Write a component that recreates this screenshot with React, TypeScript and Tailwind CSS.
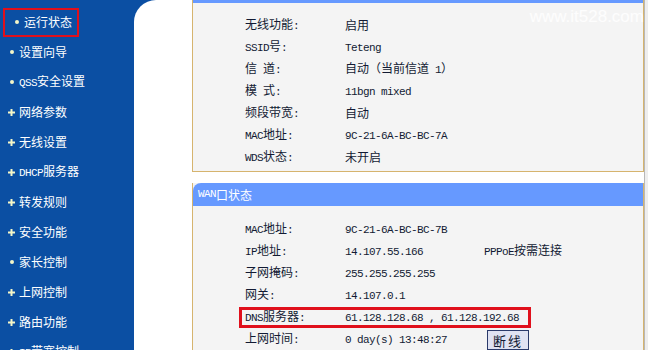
import React from 'react';

const cjk = '"Noto Sans CJK SC", "Noto Sans", sans-serif';

// split mixed text so latin runs use a narrow mono face (like the old bitmap font)
const Mixed = ({ text }: { text: string }) => {
  const parts = text.match(/[\x20-\x7e]+|[^\x20-\x7e]+/g) || [];
  return (
    <>
      {parts.map((p, i) =>
        /^[\x20-\x7e]+$/.test(p) ? (
          <span
            key={i}
            className="text-[11px] tracking-[-0.6px] whitespace-pre"
            style={{ fontFamily: '"Liberation Mono", monospace' }}
          >
            {p}
          </span>
        ) : (
          <span key={i}>{p}</span>
        ),
      )}
    </>
  );
};

const menu = [
  { name: '运行状态', dot: true },
  { name: '设置向导', dot: true },
  { name: 'QSS安全设置', dot: true },
  { name: '网络参数', dot: false },
  { name: '无线设置', dot: false },
  { name: 'DHCP服务器', dot: false },
  { name: '转发规则', dot: false },
  { name: '安全功能', dot: false },
  { name: '家长控制', dot: true },
  { name: '上网控制', dot: false },
  { name: '路由功能', dot: false },
  { name: 'IP带宽控制', dot: false },
];

const wireless = [
  ['无线功能:', '启用'],
  ['SSID号:', 'Teteng'],
  ['信 道:', '自动（当前信道 1）'],
  ['模 式:', '11bgn mixed'],
  ['频段带宽:', '自动'],
  ['MAC地址:', '9C-21-6A-BC-BC-7A'],
  ['WDS状态:', '未开启'],
];

const Row = ({ label, value, extra }: { label: string; value: string; extra?: React.ReactNode }) => (
  <div className="flex items-center h-[22px] pl-[52px]">
    <div className="w-[100px]">
      <Mixed text={label} />
    </div>
    <div className="w-[139px] whitespace-nowrap">
      <Mixed text={value} />
    </div>
    {extra}
  </div>
);

export default function App() {
  return (
    <div
      className="relative flex w-[648px] h-[350px] overflow-hidden bg-[#0b4fa3] text-[12px] text-[#121a33]"
      style={{ fontFamily: cjk }}
    >
      {/* Sidebar */}
      <div className="w-[134px] shrink-0 pt-[7px] text-white text-[12px]">
        {menu.map((m, i) => (
          <div key={m.name} className="h-[30px] flex items-center">
            <div
              className={`flex items-center h-[29px] pl-[8px] gap-[4px] ${
                i === 0 ? 'ml-[3px] -mr-[3px] pl-[5px] w-[76px] border-[2px] border-[#e0101c]' : ''
              }`}
            >
              <span className="w-[7px] flex items-center justify-center">
                {m.dot ? (
                  <span className="block w-[4px] h-[4px] rounded-full bg-[#f4f6c8]" />
                ) : (
                  <svg width="7" height="7" viewBox="0 0 7 7">
                    <path d="M3.5 0v7M0 3.5h7" stroke="#f4f6c8" strokeWidth="2" />
                  </svg>
                )}
              </span>
              <span className="whitespace-nowrap">
                <Mixed text={m.name} />
              </span>
            </div>
          </div>
        ))}
      </div>

      {/* Main content */}
      <div className="flex-1 flex bg-white rounded-tl-[22px] pl-[58px]">
        <div className="flex-1 flex flex-col">
          {/* Wireless status (scrolled, header cut off) */}
          <div className="bg-[#f4f4f4] border-l border-r border-b border-[#d6b46e] h-[179px]">
            <div className="h-[3px] bg-[#6699ff]" />
            <div className="pt-[11px]">
              {wireless.map(([l, v]) => (
                <Row key={l} label={l} value={v} />
              ))}
            </div>
          </div>

          {/* WAN status */}
          <div className="mt-[11px] flex-1 bg-[#f4f4f4] border-l border-r border-[#d6b46e]">
            <div className="h-[23px] bg-[#6699ff] rounded-tl-[8px] flex items-center pl-[5px] text-white">
              <Mixed text="WAN口状态" />
            </div>
            <div className="pt-[12px]">
              <Row label="MAC地址:" value="9C-21-6A-BC-BC-7B" />
              <Row
                label="IP地址:"
                value="14.107.55.166"
                extra={
                  <span className="whitespace-nowrap">
                    <Mixed text="PPPoE按需连接" />
                  </span>
                }
              />
              <Row label="子网掩码:" value="255.255.255.255" />
              <Row label="网关:" value="14.107.0.1" />
              <div className="relative">
                <Row label="DNS服务器:" value="61.128.128.68 , 61.128.192.68" />
                <div className="absolute left-[46px] top-[1px] w-[292px] h-[21px] border-[3px] border-[#e0101c] pointer-events-none" />
              </div>
              <Row
                label="上网时间:"
                value="0 day(s) 13:48:27"
                extra={
                  <button className="ml-[3px] mt-[2px] w-[42px] h-[20px] bg-[#dfe2f2] border border-[#2a3a6a] text-[13px] tracking-[2px] leading-none text-[#121a33]">
                    断线
                  </button>
                }
              />
            </div>
          </div>
        </div>
        <div className="w-[4px] shrink-0 border-l border-[#b8b8b8] bg-[#eeeeee]" />
      </div>

      {/* watermark */}
      <div
        className="absolute right-[4px] top-[4px] text-[17px] text-white/80 pointer-events-none"
        style={{ fontFamily: '"Liberation Sans", Arial, sans-serif' }}
      >
        www.it528.com
      </div>
    </div>
  );
}
